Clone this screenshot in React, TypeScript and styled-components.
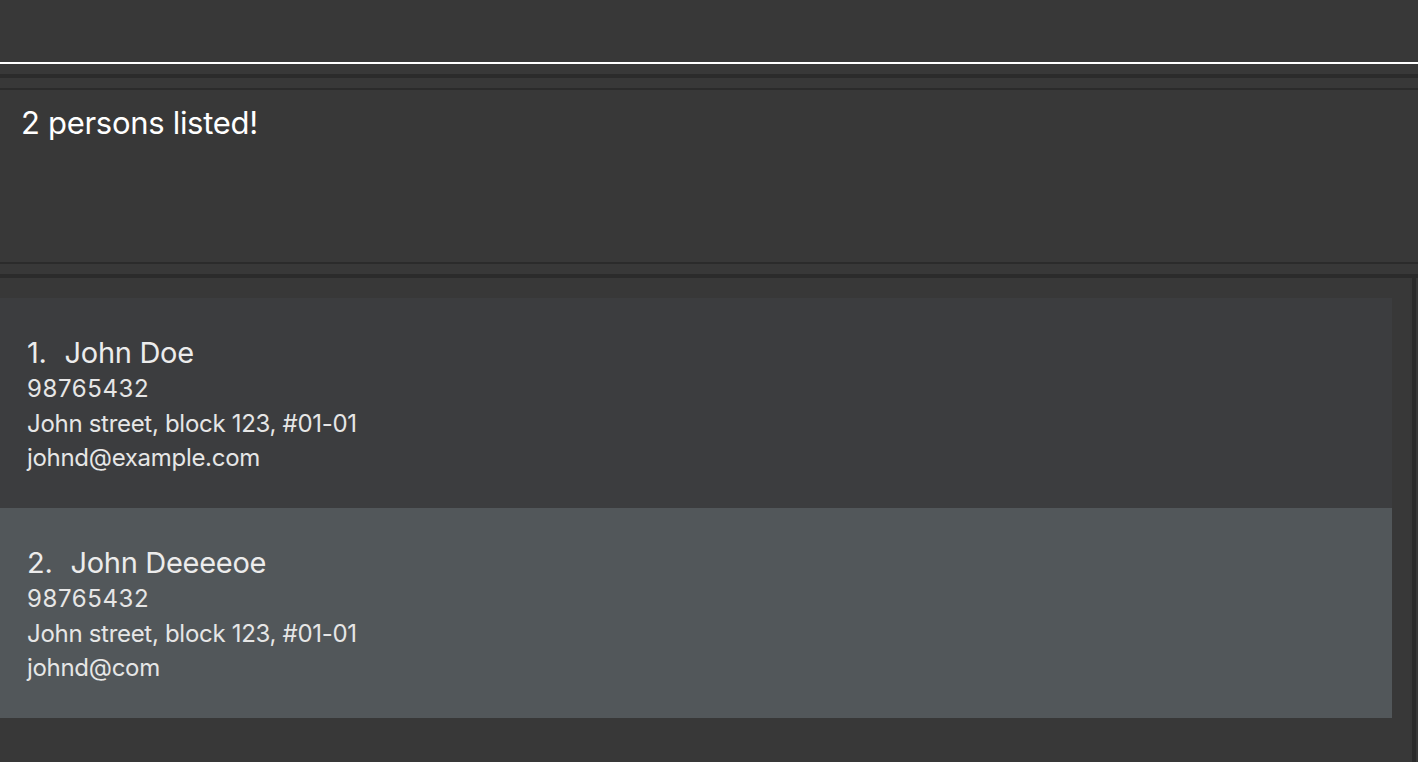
import React from "react";
import styled, { createGlobalStyle } from "styled-components";

const GlobalStyle = createGlobalStyle`
  html, body {
    margin: 0;
    padding: 0;
    background-color: #383838;
  }
  body {
    font-family: Inter, "Open Sans", "Liberation Sans", sans-serif;
    overflow: hidden;
  }
`;

const Page = styled.div`
  display: flex;
  flex-direction: column;
  width: 1418px;
  height: 762px;
  background-color: #383838;
`;

const CommandBar = styled.div`
  height: 62px;
  border-bottom: 2px solid #ffffff;
  flex-shrink: 0;
`;

const Gap = styled.div<{ $h: number }>`
  height: ${(props) => props.$h}px;
  flex-shrink: 0;
`;

const Rule = styled.div<{ $w: number }>`
  height: ${(props) => props.$w}px;
  background-color: #2b2b2b;
  flex-shrink: 0;
`;

const ResultPanel = styled.div`
  height: 176px;
  box-sizing: border-box;
  border-top: 2px solid #2b2b2b;
  border-bottom: 2px solid #2b2b2b;
  padding: 14px 21px 0;
  flex-shrink: 0;
`;

const ResultText = styled.div`
  color: #ffffff;
  font-size: 31px;
  letter-spacing: -0.3px;
`;

const ListPanel = styled.div`
  flex: 1;
  border-top: 4px solid #2b2b2b;
  padding-right: 2px;
  display: flex;
  min-height: 0;
`;

const ListView = styled.div`
  flex: 1;
  border-right: 4px solid #2b2b2b;
  padding: 20px 20px 0 0;
`;

const Card = styled.div<{ $selected?: boolean }>`
  height: 210px;
  box-sizing: border-box;
  padding: 38px 0 0 27px;
  background-color: ${(props) => (props.$selected ? "#52575a" : "#3c3d3f")};
  color: #e6e6e6;
`;

const NameRow = styled.div`
  display: flex;
  gap: 18px;
  font-size: 29px;
  line-height: 34px;
  color: #ececec;
  letter-spacing: -0.3px;
`;

const Detail = styled.div`
  font-size: 24px;
  line-height: 34.5px;
  letter-spacing: -0.3px;
`;

const Phone = styled(Detail)`
  margin-top: 2px;
  letter-spacing: 0.6px;
`;

interface Person {
  name: string;
  phone: string;
  address: string;
  email: string;
}

const persons: Person[] = [
  {
    name: "John Doe",
    phone: "98765432",
    address: "John street, block 123, #01-01",
    email: "johnd@example.com",
  },
  {
    name: "John Deeeeoe",
    phone: "98765432",
    address: "John street, block 123, #01-01",
    email: "johnd@com",
  },
];

const PersonCard = ({ person, index }: { person: Person; index: number }) => (
  <Card $selected={index === 1}>
    <NameRow>
      <span>{index + 1}.</span>
      <span>{person.name}</span>
    </NameRow>
    <Phone>{person.phone}</Phone>
    <Detail>{person.address}</Detail>
    <Detail>{person.email}</Detail>
  </Card>
);

const App = () => {
  return (
    <>
      <GlobalStyle />
      <Page>
        <CommandBar />
        <Gap $h={10} />
        <Rule $w={4} />
        <Gap $h={10} />
        <ResultPanel>
          <ResultText>2 persons listed!</ResultText>
        </ResultPanel>
        <Gap $h={10} />
        <ListPanel>
          <ListView>
            {persons.map((person, index) => (
              <PersonCard key={index} person={person} index={index} />
            ))}
          </ListView>
        </ListPanel>
      </Page>
    </>
  );
};

export default App;
